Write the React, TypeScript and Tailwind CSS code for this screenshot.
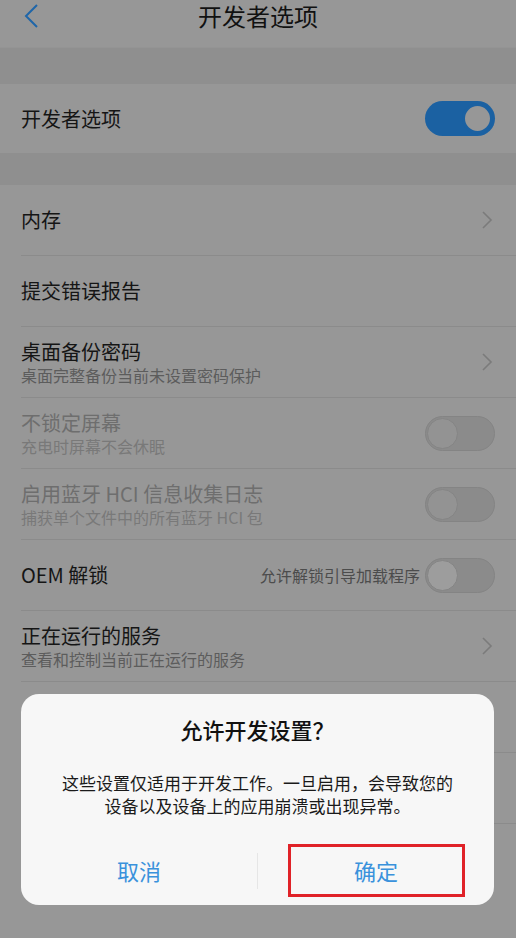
import React from 'react';

const font = { fontFamily: '"Noto Sans CJK SC", "Noto Sans", sans-serif' };

const Chevron = () => (
  <svg width="12" height="20" viewBox="0 0 12 20" className="shrink-0 mr-[2px]">
    <path d="M2 2l8 8-8 8" fill="none" stroke="#7b7b7b" strokeWidth="1.6" />
  </svg>
);

const Toggle = ({ on, light }: { on?: boolean; light?: boolean }) =>
  on ? (
    <div className="w-[70px] h-[35px] rounded-full bg-[#1b61a2] flex items-center justify-end pr-[2px] shrink-0">
      <div className="w-[31px] h-[31px] rounded-full bg-[#979797] border-[3px] border-[#1b61a2]" />
    </div>
  ) : (
    <div className="w-[70px] h-[35px] rounded-full bg-[#8b8b8b] border border-[#848484] flex items-center pl-[1px] shrink-0">
      <div
        className={`w-[31px] h-[31px] rounded-full border border-[#858585] ${light ? 'bg-[#9d9d9d]' : 'bg-[#939393]'}`}
      />
    </div>
  );

interface RowProps {
  title?: string;
  sub?: string;
  disabled?: boolean;
  right?: React.ReactNode;
  last?: boolean;
}

const Row: React.FC<RowProps> = ({ title, sub, disabled, right, last }) => (
  <div className="pl-[21px]">
    <div className={`h-[71px] flex items-center pr-[21px] ${last ? '' : 'border-b border-[#8b8b8b]'}`}>
      <div className="flex-1 flex flex-col">
        {title && (
          <div className={`text-[20px] leading-[26px] ${disabled ? 'text-[#6e6e6e]' : 'text-[#151515]'}`}>{title}</div>
        )}
        {sub && (
          <div className={`text-[16px] leading-[21px] ${disabled ? 'text-[#797979]' : 'text-[#5c5c5c]'}`}>{sub}</div>
        )}
      </div>
      {right}
    </div>
  </div>
);

export default function App() {
  return (
    <div className="relative w-[516px] h-[938px] overflow-hidden bg-[#979797]" style={font}>
      {/* header */}
      <div className="h-[47px] bg-[#979797] flex items-start">
        <div className="w-[60px] pl-[22px] pt-[3px] flex items-center">
          <svg width="18" height="26" viewBox="0 0 18 26">
            <path d="M15 2L4 13l11 11" fill="none" stroke="#1f66a9" strokeWidth="2" />
          </svg>
        </div>
        <div className="flex-1 text-center text-[24px] leading-[32px] text-[#111] pr-[60px]">开发者选项</div>
      </div>
      <div className="h-[37px] bg-[#8f8f8f] border-t border-[#949494]" />
      <div className="h-[69px] bg-[#979797] flex items-center px-[21px]">
        <div className="flex-1 text-[20px] text-[#151515]">开发者选项</div>
        <Toggle on />
      </div>
      <div className="h-[32px] bg-[#8f8f8f]" />

      <Row title="内存" right={<Chevron />} />
      <Row title="提交错误报告" />
      <Row title="桌面备份密码" sub="桌面完整备份当前未设置密码保护" right={<Chevron />} />
      <Row title="不锁定屏幕" sub="充电时屏幕不会休眠" disabled right={<Toggle />} />
      <Row title="启用蓝牙 HCI 信息收集日志" sub="捕获单个文件中的所有蓝牙 HCI 包" disabled right={<Toggle />} />
      <Row
        title="OEM 解锁"
        right={
          <div className="flex items-center gap-[5px]">
            <span className="text-[16px] text-[#4c4c4c]">允许解锁引导加载程序</span>
            <Toggle light />
          </div>
        }
      />
      <Row title="正在运行的服务" sub="查看和控制当前正在运行的服务" right={<Chevron />} />
      <Row />
      <Row />
      <Row last />

      {/* dialog */}
      <div className="absolute left-[21px] top-[694px] w-[473px] h-[211px] rounded-[18px] bg-[#f7f7f7] flex flex-col">
        <div className="pt-[20px] text-center text-[22px] leading-[30px] font-medium text-[#111]">允许开发设置？</div>
        <div className="mt-[27px] text-center text-[17px] leading-[23px] text-[#1a1a1a]">
          这些设置仅适用于开发工作。一旦启用，会导致您的
          <br />
          设备以及设备上的应用崩溃或出现异常。
        </div>
        <div className="mt-auto mb-[8px] flex items-center h-[53px]">
          <div className="flex-1 flex items-center justify-center text-[22px] text-[#3a92dc]">取消</div>
          <div className="w-px h-[36px] bg-[#e6e6e6]" />
          <div className="flex-1 flex items-center justify-center">
            <div className="w-[177px] h-[53px] border-[3px] border-[#e02228] flex items-center justify-center text-[22px] text-[#3a92dc]">
              确定
            </div>
          </div>
        </div>
      </div>
    </div>
  );
}
